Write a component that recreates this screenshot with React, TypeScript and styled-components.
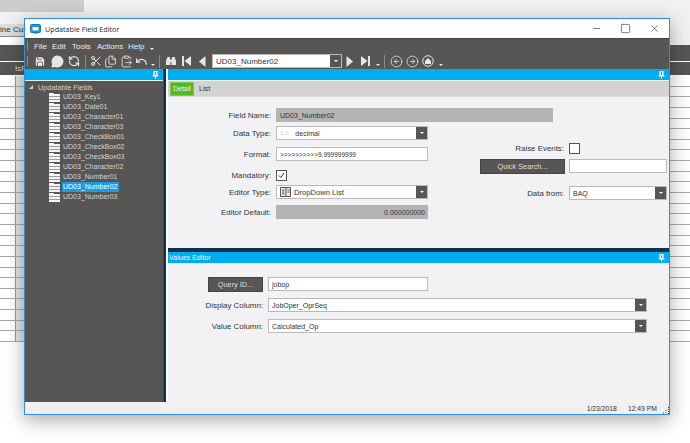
import React from "react";
import styled, { createGlobalStyle } from "styled-components";
import {
  CircleArrowLeft,
  CircleArrowRight,
  ClipboardPaste,
  Files,
  MessageCircle,
  Minus,
  RefreshCcw,
  Save,
  Scissors,
  Square,
  Undo,
  X,
} from "lucide-react";

const GlobalStyle = createGlobalStyle`
  html, body {
    margin: 0;
    padding: 0;
    background: #fff;
  }
  body {
    font-family: "Liberation Sans", Arial, sans-serif;
    font-size: 7px;
    color: #333;
  }
`;

const Desktop = styled.div`
  position: relative;
  width: 690px;
  height: 443px;
  overflow: hidden;
  background: #fff;
`;

/* ---------- application behind the dialog ---------- */

const BackHead = styled.div`
  height: 45px;
  background: #f1f1f3;
`;
const BackTopGrey = styled.div`
  width: 84px;
  height: 12px;
  background: #cdcdcd;
`;
const BackTabs = styled.div`
  margin-top: 12px;
  height: 12px;
  width: 60px;
  background: #dcdcdc;
  border-bottom: 1px solid #8b8b8b;
  color: #333;
  font-size: 8px;
  line-height: 12px;
  white-space: nowrap;
`;
const BackGap = styled.div`
  width: 60px;
  height: 8px;
  background: #fff;
`;
const BackDark = styled.div<{ $h: number }>`
  height: ${(p) => p.$h}px;
  margin-bottom: 1px;
  background: #585654;
  color: #ddd;
  font-size: 8px;
  line-height: 13px;
  padding-left: 15px;
`;
const BackRow = styled.div`
  height: 9.65px;
  background: linear-gradient(
    90deg,
    #fff 15px,
    #999 15px,
    #999 16px,
    #e6e6e6 16px,
    #e6e6e6 24px,
    #fff 24px
  );
  border-bottom: 1px solid #a9a9a9;
`;

/* ---------- dialog frame ---------- */

const Dialog = styled.div`
  position: absolute;
  left: 24px;
  top: 18px;
  width: 644px;
  height: 395px;
  display: flex;
  flex-direction: column;
  background: #f2f2f4;
  border: 1px solid #2e8fdb;
  box-shadow: 0 5px 18px rgba(0, 0, 0, 0.35);
`;
const TitleBar = styled.div`
  height: 19px;
  flex: none;
  display: flex;
  align-items: center;
  padding-left: 5px;
  background: #fff;
`;
const TitleText = styled.span`
  margin-left: 4px;
  font-family: "Open Sans", "Liberation Sans", sans-serif;
  font-size: 7.2px;
  color: #2b2b2b;
`;
const WindowButtons = styled.div`
  margin-left: auto;
  display: flex;
  padding-right: 9px;
  gap: 18px;
  color: #444;
`;
const MenuBar = styled.div`
  height: 15px;
  flex: none;
  display: flex;
  align-items: center;
  background: #585654;
  border-top: 1px solid #444;
  box-sizing: border-box;
  color: #ececec;
  padding-left: 2px;
`;
const Grip = styled.span`
  width: 1px;
  height: 10px;
  margin-right: 6px;
  background: #8d8b89;
`;
const MenuItem = styled.span<{ $w: number }>`
  width: ${(p) => p.$w}px;
  font-size: 8px;
`;
const Caret = styled.span<{ $ml?: number; $mr?: number }>`
  display: inline-block;
  flex: none;
  width: 0;
  height: 0;
  align-self: flex-end;
  margin: 0 ${(p) => p.$mr ?? 0}px 3px ${(p) => p.$ml ?? 0}px;
  border-left: 2px solid transparent;
  border-right: 2px solid transparent;
  border-top: 2px solid #eee;
`;
const ToolBar = styled.div`
  height: 16px;
  flex: none;
  display: flex;
  align-items: center;
  background: #585654;
  padding-left: 2px;
  color: #e6e6e6;
`;
const ToolSlot = styled.span<{ $w: number }>`
  flex: none;
  width: ${(p) => p.$w}px;
  display: flex;
  align-items: center;
  justify-content: center;
`;
const ToolSep = styled.span<{ $ml: number; $mr: number }>`
  flex: none;
  width: 1px;
  height: 13px;
  margin: 0 ${(p) => p.$mr}px 0 ${(p) => p.$ml}px;
  background: #8d8b89;
`;
const Body = styled.div`
  flex: 1;
  min-height: 0;
  display: flex;
`;

/* ---------- left tree ---------- */

const LeftPane = styled.div`
  width: 138px;
  flex: none;
  display: flex;
  flex-direction: column;
  background: #585654;
  border-right: 1px solid #444;
`;
const Divider = styled.div`
  width: 2px;
  flex: none;
  background: #10304e;
  border-right: 2px solid #fff;
`;
const BlueHeader = styled.div`
  height: 11px;
  flex: none;
  display: flex;
  align-items: center;
  justify-content: space-between;
  padding: 0 4px 0 1px;
  background: #00adef;
  color: #eaf8fe;
  font-size: 7.1px;
`;
const Tree = styled.div`
  flex: 1;
  border-top: 1px solid #eee;
  padding-top: 1px;
`;
const TreeRoot = styled.div`
  height: 10px;
  display: flex;
  align-items: center;
  padding-left: 4px;
  color: #cfcfcf;
  font-size: 7.3px;
`;
const RootArrow = styled.span`
  width: 0;
  height: 0;
  margin-right: 5px;
  border-left: 4px solid transparent;
  border-bottom: 4px solid #cfcfcf;
`;
const TreeItem = styled.div`
  height: 10px;
  display: flex;
  align-items: center;
  padding-left: 24px;
`;
const ItemLabel = styled.span<{ $selected?: boolean }>`
  margin-left: 2px;
  padding: 0 2px 0 1px;
  line-height: 10px;
  font-size: 7px;
  white-space: nowrap;
  color: ${(p) => (p.$selected ? "#fff" : "#d4d4d4")};
  background: ${(p) => (p.$selected ? "#1a9be4" : "transparent")};
`;

/* ---------- right side ---------- */

const RightPane = styled.div`
  flex: 1;
  min-width: 0;
  display: flex;
  flex-direction: column;
`;
const DetailPanel = styled.div`
  height: 179px;
  flex: none;
  display: flex;
  flex-direction: column;
  border-bottom: 4px solid #10304e;
  box-sizing: content-box;
`;
const TabStrip = styled.div`
  height: 15px;
  margin-top: 1px;
  flex: none;
  display: flex;
  align-items: center;
  background: #d3d3d3;
  border-bottom: 1px solid #ddd;
`;
const ActiveTab = styled.span`
  width: 24px;
  height: 14px;
  margin-left: 2px;
  display: flex;
  align-items: center;
  justify-content: center;
  background: #55b81e;
  border: 1px solid #7bc94f;
  box-sizing: border-box;
  color: #f2fbe9;
  font-size: 6.8px;
`;
const PlainTab = styled.span`
  margin-left: 5px;
  font-size: 7.2px;
  color: #333;
`;
const DetailBody = styled.div`
  flex: 1;
  padding-top: 11px;
`;
const FormRow = styled.div<{ $mt?: number }>`
  display: flex;
  align-items: center;
  height: 14px;
  margin-top: ${(p) => p.$mt ?? 0}px;
`;
const FieldLabel = styled.label<{ $w: number }>`
  width: ${(p) => p.$w}px;
  flex: none;
  margin-right: 5px;
  text-align: right;
  font-size: 7.9px;
  white-space: nowrap;
  color: #333;
`;
const TextBox = styled.div<{ $w: number; $grey?: boolean; $right?: boolean; $size?: number }>`
  width: ${(p) => p.$w}px;
  height: 14px;
  flex: none;
  display: flex;
  align-items: center;
  justify-content: ${(p) => (p.$right ? "flex-end" : "flex-start")};
  box-sizing: border-box;
  padding: 0 2px 0 3px;
  border: 1px solid ${(p) => (p.$grey ? "#b4b4b4" : "#b9b9b9")};
  background: ${(p) => (p.$grey ? "#b4b4b4" : "#fff")};
  font-size: ${(p) => p.$size ?? 7}px;
  color: #333;
  white-space: nowrap;
`;
const ComboBox = styled(TextBox)`
  padding-right: 0;
`;
const ComboButton = styled.span`
  margin-left: auto;
  width: 11px;
  height: 12px;
  flex: none;
  display: flex;
  align-items: center;
  justify-content: center;
  background: #585654;
`;
const ComboCaret = styled.span`
  width: 0;
  height: 0;
  border-left: 2px solid transparent;
  border-right: 2px solid transparent;
  border-top: 2px solid #fff;
`;
const FaintNumber = styled.span`
  margin-right: 7px;
  color: #ccc;
  font-size: 6px;
`;
const CheckBox = styled.span`
  width: 9px;
  height: 9px;
  flex: none;
  display: flex;
  align-items: center;
  justify-content: center;
  background: #fff;
  border: 1px solid #555;
`;
const DarkButton = styled.button<{ $w: number; $ml: number; $mr: number }>`
  width: ${(p) => p.$w}px;
  height: 15px;
  flex: none;
  margin: 0 ${(p) => p.$mr}px 0 ${(p) => p.$ml}px;
  padding: 0;
  border: 1px solid #444;
  background: #585654;
  color: #ddd;
  font-family: inherit;
  font-size: 7.3px;
`;
const FormColumns = styled.div`
  display: flex;
`;
const LeftColumn = styled.div`
  width: 260px;
  flex: none;
`;
const RightColumn = styled.div`
  flex: 1;
  padding-top: 19px;
`;
const ValuesPanel = styled.div`
  flex: 1;
  display: flex;
  flex-direction: column;
`;
const ValuesBody = styled.div`
  padding-top: 14px;
`;
const StatusBar = styled.div`
  position: relative;
  height: 12px;
  flex: none;
  display: flex;
  justify-content: flex-end;
  align-items: center;
  gap: 11px;
  padding-right: 12px;
  background: #f0f0f0;
  font-size: 6.8px;
  color: #333;
`;
const ResizeGrip = styled.svg`
  position: absolute;
  right: 0;
  bottom: 0;
`;

const fields = [
  "UD03_Key1",
  "UD03_Date01",
  "UD03_Character01",
  "UD03_Character03",
  "UD03_CheckBox01",
  "UD03_CheckBox02",
  "UD03_CheckBox03",
  "UD03_Character02",
  "UD03_Number01",
  "UD03_Number02",
  "UD03_Number03",
];

const backRows = Array.from({ length: 25 });

const Pin = () => (
  <svg width="7" height="8" viewBox="0 0 7 8">
    <path d="M1.5 0h4v4.5h1v1H4v2.5H3V5.5H.5v-1h1z" fill="#fff" />
    <path d="M3 1h1v3H3z" fill="#00adef" />
  </svg>
);

const Folder = () => (
  <svg width="11" height="9" viewBox="0 0 11 9">
    <path d="M0 0h5v1h6v8H0z" fill="#f4f4f4" />
    <path d="M0 3h11v1H0zM0 6h11v1H0z" fill="#9a9896" />
  </svg>
);

const Combo = ({ width, children }: any) => (
  <ComboBox $w={width}>
    {children}
    <ComboButton>
      <ComboCaret />
    </ComboButton>
  </ComboBox>
);

const Check = () => (
  <svg width="7" height="7" viewBox="0 0 7 7">
    <path d="M1 3.5l1.8 2L6 1" fill="none" stroke="#333" strokeWidth="1" />
  </svg>
);

const Binoculars = () => (
  <svg width="12" height="11" viewBox="0 0 11 11" fill="#e6e6e6">
    <path d="M2 1h2.5v2H5v6H.5V5zM6.500 1H9v0l1.500 4v4H6V3h.5zM5 4h1v2H5z" />
  </svg>
);

const Triangle = ({ left }: { left?: boolean }) => (
  <svg width="7" height="11" viewBox="0 0 7 11" fill="#e6e6e6">
    <path d={left ? "M6.500 0v11L0 5.500z" : "M.5 0v11L7 5.500z"} />
  </svg>
);

const SkipIcon = ({ left }: { left?: boolean }) => (
  <svg width="9" height="10" viewBox="0 0 9 10" fill="#e6e6e6">
    <path d={left ? "M0 0h2v10H0zM9 0v10L2.500 5z" : "M9 0H7v10h2zM0 0v10l6.500-5z"} />
  </svg>
);

const HomeCircle = () => (
  <svg width="12" height="12" viewBox="0 0 12 12">
    <circle cx="6" cy="6" r="5.300" fill="none" stroke="#e6e6e6" strokeWidth="1" />
    <path d="M3 6l3-3 3 3v3H3z" fill="#e6e6e6" />
  </svg>
);

const AppIcon = () => (
  <svg width="11" height="10" viewBox="0 0 11 10">
    <rect x="0.500" y="0.500" width="10" height="8" rx="1" fill="#2a94d8" stroke="#1878b8" />
    <rect x="2.500" y="3" width="6" height="3.500" fill="#e6f4fc" />
    <rect x="3" y="8.500" width="5" height="1" fill="#1878b8" />
  </svg>
);

export default function App() {
  return (
    <Desktop>
      <GlobalStyle />
      <BackHead>
        <BackTopGrey />
        <BackTabs>ine Cus</BackTabs>
        <BackGap />
      </BackHead>
      <BackDark $h={16} />
      <BackDark $h={13}>IsF</BackDark>
      {backRows.map((_, index) => (
        <BackRow key={index} />
      ))}

      <Dialog>
        <TitleBar>
          <AppIcon />
          <TitleText>Updatable Field Editor</TitleText>
          <WindowButtons>
            <Minus size={11} strokeWidth={1.5} />
            <Square size={11} strokeWidth={1.5} />
            <X size={11} strokeWidth={1.5} />
          </WindowButtons>
        </TitleBar>
        <MenuBar>
          <Grip />
          <MenuItem $w={18}>File</MenuItem>
          <MenuItem $w={20}>Edit</MenuItem>
          <MenuItem $w={25}>Tools</MenuItem>
          <MenuItem $w={31}>Actions</MenuItem>
          <MenuItem $w={22}>Help</MenuItem>
          <Caret />
        </MenuBar>
        <ToolBar>
          <Grip />
          <ToolSlot $w={12}>
            <Save size={13} fill="#e6e6e6" stroke="#585654" strokeWidth={1.5} />
          </ToolSlot>
          <ToolSlot $w={22}>
            <MessageCircle size={13} fill="#e6e6e6" />
          </ToolSlot>
          <ToolSlot $w={12}>
            <RefreshCcw size={12} strokeWidth={2.5} />
          </ToolSlot>
          <ToolSep $ml={5} $mr={3} />
          <ToolSlot $w={13}>
            <Scissors size={12} strokeWidth={2} />
          </ToolSlot>
          <ToolSlot $w={16}>
            <Files size={13} strokeWidth={1.6} />
          </ToolSlot>
          <ToolSlot $w={16}>
            <ClipboardPaste size={13} strokeWidth={1.6} />
          </ToolSlot>
          <ToolSlot $w={15}>
            <Undo size={13} strokeWidth={2.2} />
          </ToolSlot>
          <Caret $ml={2} $mr={2} />
          <ToolSep $ml={2} $mr={4} />
          <ToolSlot $w={14}>
            <Binoculars />
          </ToolSlot>
          <ToolSlot $w={16}>
            <SkipIcon left />
          </ToolSlot>
          <ToolSlot $w={16}>
            <Triangle left />
          </ToolSlot>
          <ComboBox $w={130} $size={8} style={{ marginLeft: 2 }}>
            UD03_Number02
            <ComboButton>
              <ComboCaret />
            </ComboButton>
          </ComboBox>
          <ToolSlot $w={15}>
            <Triangle />
          </ToolSlot>
          <ToolSlot $w={16}>
            <SkipIcon />
          </ToolSlot>
          <Caret $ml={3} $mr={3} />
          <ToolSep $ml={1} $mr={3} />
          <ToolSlot $w={16}>
            <CircleArrowLeft size={13} strokeWidth={1.5} />
          </ToolSlot>
          <ToolSlot $w={16}>
            <CircleArrowRight size={13} strokeWidth={1.5} />
          </ToolSlot>
          <ToolSlot $w={16}>
            <HomeCircle />
          </ToolSlot>
          <Caret $ml={3} />
        </ToolBar>
        <Body>
          <LeftPane>
            <BlueHeader>
              <span />
              <Pin />
            </BlueHeader>
            <Tree>
              <TreeRoot>
                <RootArrow />
                <span>Updatable Fields</span>
              </TreeRoot>
              {fields.map((field) => (
                <TreeItem key={field}>
                  <Folder />
                  <ItemLabel $selected={field === "UD03_Number02"}>{field}</ItemLabel>
                </TreeItem>
              ))}
            </Tree>
          </LeftPane>
          <Divider />
          <RightPane>
            <DetailPanel>
              <BlueHeader>
                <span />
                <Pin />
              </BlueHeader>
              <TabStrip>
                <ActiveTab>Detail</ActiveTab>
                <PlainTab>List</PlainTab>
              </TabStrip>
              <DetailBody>
                <FormRow>
                  <FieldLabel $w={103}>Field Name:</FieldLabel>
                  <TextBox $w={277} $grey>
                    UD03_Number02
                  </TextBox>
                </FormRow>
                <FormColumns>
                  <LeftColumn>
                    <FormRow $mt={4}>
                      <FieldLabel $w={103}>Data Type:</FieldLabel>
                      <Combo width={152}>
                        <FaintNumber>1.2</FaintNumber>
                        decimal
                      </Combo>
                    </FormRow>
                    <FormRow $mt={7}>
                      <FieldLabel $w={103}>Format:</FieldLabel>
                      <TextBox $w={152} $size={6.5}>
                        &gt;&gt;&gt;&gt;&gt;&gt;&gt;&gt;&gt;&gt;9.999999999
                      </TextBox>
                    </FormRow>
                    <FormRow $mt={7}>
                      <FieldLabel $w={103}>Mandatory:</FieldLabel>
                      <CheckBox>
                        <Check />
                      </CheckBox>
                    </FormRow>
                    <FormRow $mt={3}>
                      <FieldLabel $w={103}>Editor Type:</FieldLabel>
                      <Combo width={152}>
                        <svg width="11" height="10" viewBox="0 0 11 10" style={{ marginRight: 3 }}>
                          <path
                            d="M.5.5h10v9H.5zM6 .5v9M2 3h2.500M2 5h2.500M2 7h2.500M7.500 3h2M7.500 5h2"
                            fill="#eee"
                            stroke="#555"
                          />
                        </svg>
                        <span style={{ fontSize: 7.6 }}>DropDown List</span>
                      </Combo>
                    </FormRow>
                    <FormRow $mt={6}>
                      <FieldLabel $w={103}>Editor Default:</FieldLabel>
                      <TextBox $w={152} $grey $right>
                        0.000000000
                      </TextBox>
                    </FormRow>
                  </LeftColumn>
                  <RightColumn>
                    <FormRow>
                      <FieldLabel $w={136}>Raise Events:</FieldLabel>
                      <CheckBox />
                    </FormRow>
                    <FormRow $mt={4}>
                      <DarkButton $w={85} $ml={52} $mr={4}>
                        Quick Search...
                      </DarkButton>
                      <TextBox $w={98} />
                    </FormRow>
                    <FormRow $mt={13}>
                      <FieldLabel $w={136}>Data from:</FieldLabel>
                      <Combo width={98}>BAQ</Combo>
                    </FormRow>
                  </RightColumn>
                </FormColumns>
              </DetailBody>
            </DetailPanel>
            <ValuesPanel>
              <BlueHeader>
                <span>Values Editor</span>
                <Pin />
              </BlueHeader>
              <ValuesBody>
                <FormRow>
                  <DarkButton $w={55} $ml={40} $mr={5}>
                    Query ID...
                  </DarkButton>
                  <TextBox $w={160}>jobop</TextBox>
                </FormRow>
                <FormRow $mt={7}>
                  <FieldLabel $w={95}>Display Column:</FieldLabel>
                  <Combo width={379}>JobOper_OprSeq</Combo>
                </FormRow>
                <FormRow $mt={7}>
                  <FieldLabel $w={95}>Value Column:</FieldLabel>
                  <Combo width={379}>Calculated_Op</Combo>
                </FormRow>
              </ValuesBody>
            </ValuesPanel>
          </RightPane>
        </Body>
        <StatusBar>
          <span>1/23/2018</span>
          <span>12:49 PM</span>
          <ResizeGrip width="7" height="7" viewBox="0 0 7 7">
            <path d="M6.500 0v7M4 3v4M1.500 5.500V7" stroke="#444" strokeWidth="1" strokeDasharray="1 1" />
          </ResizeGrip>
        </StatusBar>
      </Dialog>
    </Desktop>
  );
}
